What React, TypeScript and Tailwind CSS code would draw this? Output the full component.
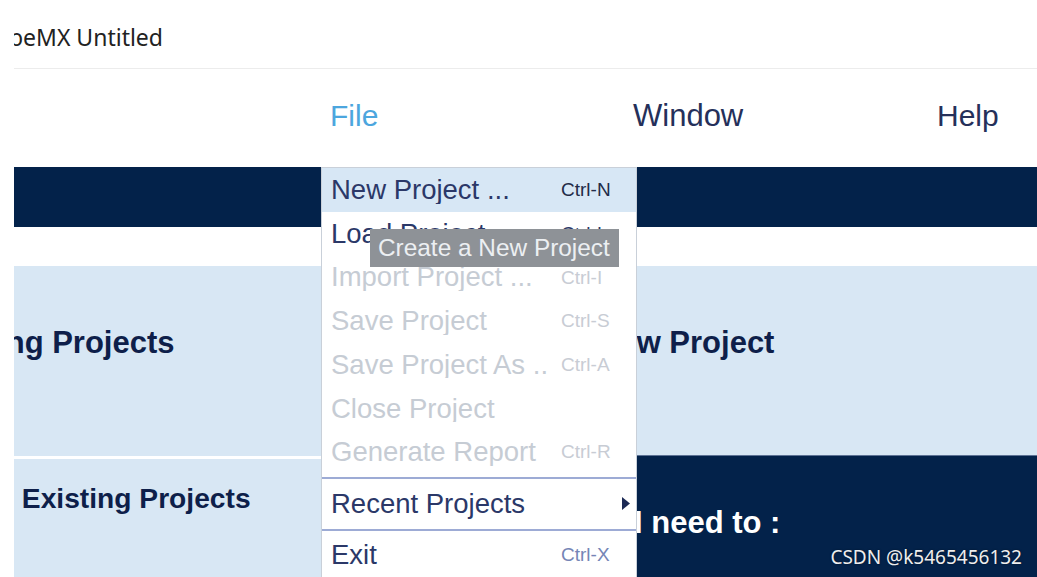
import React from "react";

type Item = { label: string; keys: string; state: "active" | "enabled" | "disabled" };

const topItems: Item[] = [
  { label: "New Project ...", keys: "Ctrl-N", state: "active" },
  { label: "Load Project ...", keys: "Ctrl-L", state: "enabled" },
  { label: "Import Project ...", keys: "Ctrl-I", state: "disabled" },
  { label: "Save Project", keys: "Ctrl-S", state: "disabled" },
  { label: "Save Project As ...", keys: "Ctrl-A", state: "disabled" },
  { label: "Close Project", keys: "", state: "disabled" },
  { label: "Generate Report", keys: "Ctrl-R", state: "disabled" },
];

const FileMenu = () => {
  return (
    <div className="absolute left-[307px] top-[167px] w-[316px] h-[412px] border border-[#c9d0d9] bg-white font-['Liberation_Sans',Arial,sans-serif]">
      {topItems.map((it) => (
        <div
          key={it.label}
          className={
            "flex h-[43.7px] items-center pl-[9px] " +
            (it.state === "active" ? "bg-[#d7e7f5]" : "")
          }
        >
          <span
            className={
              "mr-[13px] w-[217px] shrink-0 overflow-hidden whitespace-nowrap text-[27.5px] leading-none " +
              (it.state === "disabled" ? "text-[#c6ccd4]" : "text-[#2b3868]")
            }
          >
            {it.label}
          </span>
          <span
            className={
              "text-[19px] leading-none " +
              (it.state === "disabled"
                ? "text-[#c8ccd4]"
                : it.state === "active"
                ? "text-[#222b48]"
                : "text-[#2b3868]")
            }
          >
            {it.keys}
          </span>
        </div>
      ))}

      <div className="mt-[3px] h-[2px] bg-[#9dabd5]" />
      <div className="flex h-[50px] items-center pl-[9px]">
        <span className="text-[27.5px] leading-none text-[#2b3868]">Recent Projects</span>
        <svg className="ml-auto mr-[6px]" width="8" height="13" viewBox="0 0 8 13">
          <path d="M0 0 L8 6.5 L0 13 Z" fill="#1c2a55" />
        </svg>
      </div>
      <div className="h-[2px] bg-[#9dabd5]" />
      <div className="flex h-[45px] items-center pl-[9px] pt-[3px]">
        <span className="w-[230px] text-[27.5px] leading-none text-[#2b3868]">Exit</span>
        <span className="text-[19px] leading-none text-[#7585b6]">Ctrl-X</span>
      </div>

      {/* tooltip */}
      <div className="absolute left-[48px] top-[61px] h-[38px] w-[249px] bg-[#8e9297] pl-[8px] text-[24.4px] leading-[38px] text-[#eceff2] whitespace-nowrap">
        Create a New Project
      </div>
    </div>
  );
};

export default function App() {
  return (
    <div className="flex h-[577px] w-[1037px] overflow-hidden bg-white">
      <div className="w-[14px] shrink-0 bg-white" />
      <div className="relative flex flex-1 flex-col overflow-hidden">
        {/* title */}
        <div className="h-[69px] shrink-0 border-b border-[#ececec] pt-[22px]">
          <div className="flex w-[149px] justify-end whitespace-nowrap font-['Noto_Sans',sans-serif] text-[23px] leading-[30px] text-[#222]">
            <span>STM32CubeMX Untitled</span>
          </div>
        </div>

        {/* menu bar */}
        <div className="flex h-[98px] shrink-0 items-baseline pl-[316px] pt-[29px] font-['Liberation_Sans',Arial,sans-serif] text-[30px] leading-[36px]">
          <div className="w-[303px] text-[#4ca6de]">File</div>
          <div className="w-[304px] text-[31px] text-[#25305a]">Window</div>
          <div className="text-[#25305a]">Help</div>
        </div>

        {/* dark band */}
        <div className="h-[60px] shrink-0 bg-[#03224a]" />
        <div className="h-[39px] shrink-0 bg-white" />

        {/* panels */}
        <div className="flex flex-1 font-['Liberation_Sans',Arial,sans-serif] font-bold">
          <div className="flex w-[623px] shrink-0 flex-col">
            <div className="h-[190px] bg-[#d8e7f4] pt-[59px]">
              <div className="-ml-[91px] whitespace-nowrap text-[31px] leading-[36px] text-[#0e1f4a]">
                Existing Projects
              </div>
            </div>
            <div className="h-[3px] bg-white" />
            <div className="flex-1 bg-[#d8e7f4] pt-[23px]">
              <div className="-ml-[72px] whitespace-nowrap text-[28.2px] leading-[32px] text-[#0e1f4a]">
                Open Existing Projects
              </div>
            </div>
          </div>
          <div className="flex flex-1 flex-col">
            <div className="h-[189px] bg-[#d8e7f4] pt-[59px]">
              <div className="-ml-[40px] whitespace-nowrap text-[31px] leading-[36px] text-[#0e1f4a]">
                New Project
              </div>
            </div>
            <div className="flex-1 border-t border-[#5d7294] bg-[#03224a] pt-[49px]">
              <div className="-ml-[3px] whitespace-nowrap text-[31px] leading-[36px] text-white">
                I need to :
              </div>
            </div>
          </div>
        </div>

        <FileMenu />

        <div className="absolute bottom-[8px] right-[15px] font-['Noto_Sans',sans-serif] text-[19px] leading-[24px] text-[#eeeeee] [text-shadow:0_0_2px_rgba(0,0,0,0.5)]">
          CSDN @k5465456132
        </div>
      </div>
    </div>
  );
}
